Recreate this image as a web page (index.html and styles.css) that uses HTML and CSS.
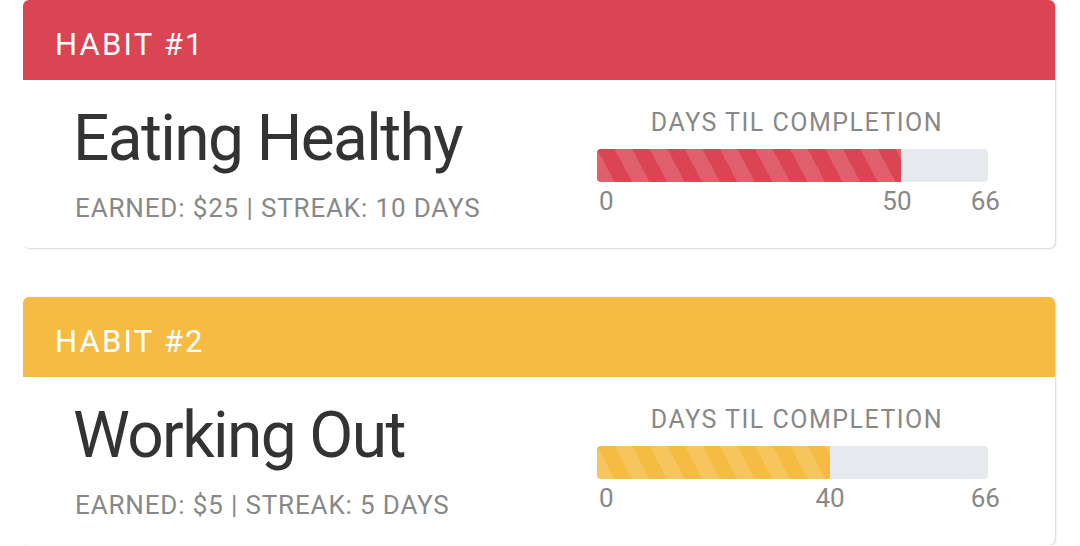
FILE: index.html
```html
<!DOCTYPE html>
<html>
<head>
<meta charset="utf-8">
<link rel="stylesheet" href="styles.css">
</head>
<body>
<div class="list">
  <section class="card card-red">
    <header class="card-head">HABIT #1</header>
    <div class="card-body">
      <div class="info">
        <h2 class="title">Eating Healthy</h2>
        <p class="meta">EARNED: $25 | STREAK: 10 DAYS</p>
      </div>
      <div class="progress">
        <div class="progress-label">DAYS TIL COMPLETION</div>
        <div class="track"><div class="fill" style="width:77.75%"></div></div>
        <div class="ticks">
          <span class="tick tick-start">0</span>
          <span class="tick" style="left:76.7%">50</span>
          <span class="tick tick-end">66</span>
        </div>
      </div>
    </div>
  </section>
  <section class="card card-yellow">
    <header class="card-head">HABIT #2</header>
    <div class="card-body">
      <div class="info">
        <h2 class="title">Working Out</h2>
        <p class="meta">EARNED: $5 | STREAK: 5 DAYS</p>
      </div>
      <div class="progress">
        <div class="progress-label">DAYS TIL COMPLETION</div>
        <div class="track"><div class="fill" style="width:59.6%"></div></div>
        <div class="ticks">
          <span class="tick tick-start">0</span>
          <span class="tick" style="left:59.6%">40</span>
          <span class="tick tick-end">66</span>
        </div>
      </div>
    </div>
  </section>
</div>
</body>
</html>
```

FILE: styles.css
```css
* { box-sizing: border-box; }
html, body {
  margin: 0;
  padding: 0;
  background: #ffffff;
  font-family: Roboto, "Liberation Sans", Arial, sans-serif;
}
.list {
  display: flex;
  flex-direction: column;
  gap: 49px;
  padding: 0 0 0 23px;
  width: 1056px;
}
.card {
  width: 1032px;
  background: #fff;
  border-radius: 6px;
  box-shadow: 1px 1px 2px rgba(0, 0, 0, 0.16);
  overflow: hidden;
}
.card-head {
  height: 80px;
  padding-left: 32px;
  display: flex;
  align-items: center;
  color: #fff;
  font-size: 31px;
  letter-spacing: 2.2px;
  font-weight: 400;
  padding-top: 8px;
}
.card-red .card-head { background: #da4453; }
.card-yellow .card-head { background: #f6bb42; }
.card-red .fill { background-color: #da4453; }
.card-yellow .fill { background-color: #f6bb42; }
.card-body {
  height: 168px;
  display: flex;
  justify-content: space-between;
  padding: 0 67px 0 52px;
}
.info {
  display: flex;
  flex-direction: column;
}
.title {
  margin: 27px 0 0 -2px;
  font-size: 64px;
  line-height: 64px;
  font-weight: 400;
  letter-spacing: -1.6px;
  color: #333333;
}
.meta {
  margin: 22px 0 0 0;
  font-size: 26px;
  line-height: 30px;
  letter-spacing: 0.85px;
  color: #888888;
}
.progress {
  width: 391px;
  padding-top: 28px;
  display: flex;
  flex-direction: column;
}
.progress-label {
  text-align: center;
  font-size: 25px;
  line-height: 30px;
  letter-spacing: 1.5px;
  color: #888888;
  padding-left: 9px;
}
.track {
  margin-top: 11px;
  height: 33px;
  background: #e6e9ed;
  border-radius: 4px;
  overflow: hidden;
}
.fill {
  height: 100%;
  background-image: repeating-linear-gradient(62deg,
    rgba(255, 255, 255, 0.15) 0 15.5px,
    transparent 15.5px 31px);
}
.ticks {
  position: relative;
  height: 34px;
  margin-top: 2px;
  font-size: 26px;
  line-height: 34px;
  color: #888888;
}
.tick {
  position: absolute;
  top: 0;
  transform: translateX(-50%);
}
.tick-start {
  left: 2px;
  transform: none;
}
.tick-end {
  left: 99.3%;
}
```
